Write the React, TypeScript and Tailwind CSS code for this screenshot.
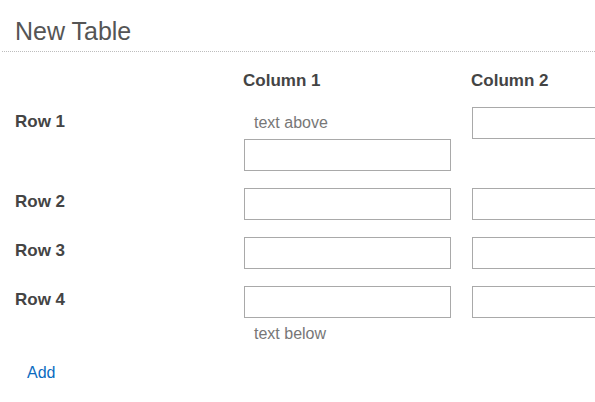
import React from "react";

const rows = ["Row 1", "Row 2", "Row 3", "Row 4"];

const Field: React.FC = () => (
  <input
    type="text"
    className="block h-[32px] w-[207px] border border-[#a9a9a9] bg-white px-2 text-[16px] outline-none"
  />
);

const App: React.FC = () => {
  return (
    <div className="h-screen overflow-hidden bg-white font-['Liberation_Sans',Arial,sans-serif] text-[16px]">
      <div className="ml-[2px] border-b border-dotted border-[#bdbdbd] pb-[5px] pl-[13px] pt-[17px]">
        <h1 className="text-[25px] font-normal leading-[29px] text-[#555]">New Table</h1>
      </div>

      <div className="mt-[19px] flex text-[17px] leading-[20px]">
        <div className="w-[243px] shrink-0" />
        <div className="w-[228px] shrink-0 font-bold text-[#444]">Column 1</div>
        <div className="shrink-0 font-bold text-[#444]">Column 2</div>
      </div>

      <div className="mt-[16px] flex flex-col gap-[17px]">
        {rows.map((row, i) => (
          <div key={row} className="flex">
            <div
              className={`w-[244px] shrink-0 pl-[15px] text-[17px] font-bold leading-[20px] text-[#444] ${
                i === 0 ? "pt-[5px]" : "pt-[4px]"
              }`}
            >
              {row}
            </div>
            <div className="w-[207px] shrink-0">
              {i === 0 && <div className="h-[32px] pl-[10px] leading-[32px] text-[#777]">text above</div>}
              <Field />
              {i === 3 && <div className="h-[30px] pl-[10px] pt-[1px] leading-[30px] text-[#777]">text below</div>}
            </div>
            <div className="ml-[21px] shrink-0">
              <Field />
            </div>
          </div>
        ))}
      </div>

      <div className="mt-[15px] pl-[27px] leading-[20px]">
        <a href="#" className="text-[#0b6bbf]">
          Add
        </a>
      </div>
    </div>
  );
};

export default App;
